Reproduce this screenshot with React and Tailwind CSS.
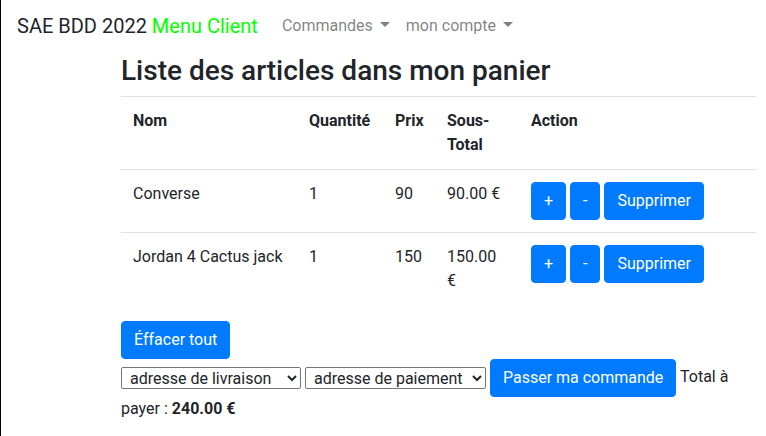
import React from "react";

const items = [
  { nom: "Converse", quantite: 1, prix: 90 },
  { nom: "Jordan 4 Cactus jack", quantite: 1, prix: 150 },
];

function Caret() {
  return (
    <span className="inline-block ml-[7px] align-[4px] w-0 h-0 border-t-[5px] border-t-current border-x-[5px] border-x-transparent"></span>
  );
}

function Btn({ children, className = "" }) {
  return (
    <button className={"inline-block bg-[#007bff] text-white border border-[#007bff] rounded px-3 py-[6px] leading-6 align-middle " + className}>
      {children}
    </button>
  );
}

export default function App() {
  const total = items.reduce((s, it) => s + it.prix * it.quantite, 0);

  return (
    <div className="min-h-[436px] bg-white border-l border-black text-[#212529] text-base leading-6" style={{ fontFamily: "Roboto, 'Noto Sans', sans-serif" }}>
      {/* navbar */}
      <nav className="h-[51px] flex items-center px-4">
        <span className="text-xl leading-[30px] mr-4">
          SAE BDD 2022 <span className="text-[#00ff00]">Menu Client</span>
        </span>
        <a className="px-2 text-black/50">Commandes<Caret /></a>
        <a className="px-2 text-black/50">mon compte<Caret /></a>
      </nav>

      <div className="ml-[120px] w-[635px]">
        <h3 className="text-[28px] font-medium leading-[1.2] mt-[3px] mb-2">Liste des articles dans mon panier</h3>

        <table className="w-full table-fixed border-collapse mb-4">
          <colgroup>
            <col className="w-[176px]" />
            <col className="w-[86px]" />
            <col className="w-[52px]" />
            <col className="w-[84px]" />
            <col />
          </colgroup>
          <thead>
            <tr className="border-t border-[#dee2e6]">
              <th className="p-3 text-left align-top font-bold">Nom</th>
              <th className="p-3 text-left align-top font-bold">Quantité</th>
              <th className="p-3 text-left align-top font-bold">Prix</th>
              <th className="p-3 text-left align-top font-bold">Sous-Total</th>
              <th className="p-3 text-left align-top font-bold">Action</th>
            </tr>
          </thead>
          <tbody>
            {items.map((it) => (
              <tr key={it.nom} className="border-t border-[#dee2e6]">
                <td className="p-3 align-top">{it.nom}</td>
                <td className="p-3 align-top">{it.quantite}</td>
                <td className="p-3 align-top">{it.prix}</td>
                <td className="p-3 align-top">{(it.prix * it.quantite).toFixed(2)} €</td>
                <td className="p-3 align-top whitespace-nowrap">
                  <Btn>+</Btn> <Btn>-</Btn> <Btn>Supprimer</Btn>
                </td>
              </tr>
            ))}
          </tbody>
        </table>

        <Btn>Éffacer tout</Btn>
        <div>
          <select className="w-[180px] h-[22px] pl-[4px] border border-[#767676] rounded-[2px] bg-white align-middle">
            <option>adresse de livraison</option>
          </select>{" "}
          <select className="w-[181px] h-[22px] pl-[4px] border border-[#767676] rounded-[2px] bg-white align-middle">
            <option>adresse de paiement</option>
          </select>{" "}
          <Btn>Passer ma commande</Btn>{" "}
          Total à payer : <strong className="font-bold">{total.toFixed(2)} €</strong>
        </div>
      </div>
    </div>
  );
}
